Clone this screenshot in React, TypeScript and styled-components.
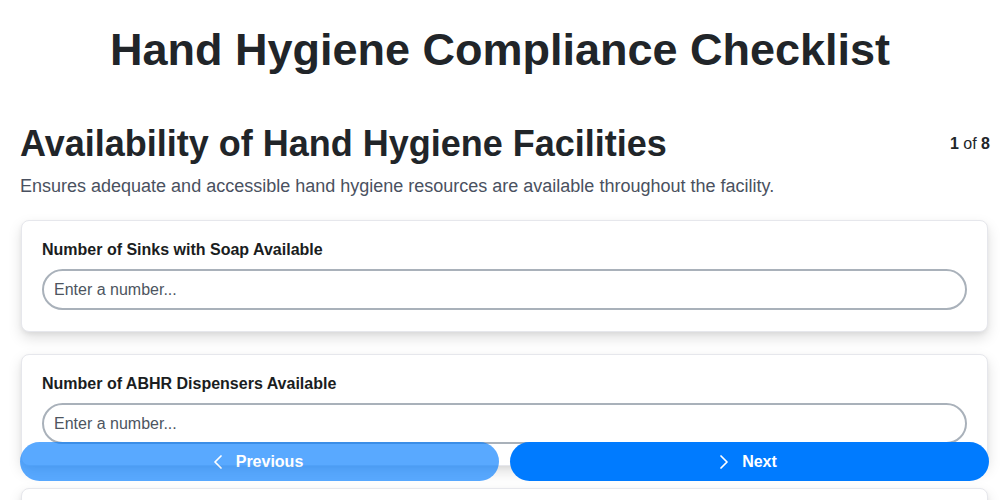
import * as React from 'react';
import styled, { createGlobalStyle } from 'styled-components';
import { ChevronLeft, ChevronRight } from 'lucide-react';

const GlobalStyle = createGlobalStyle`
  * { box-sizing: border-box; }
  body {
    margin: 0;
    background: #ffffff;
    font-family: "Liberation Sans", Arial, sans-serif;
    color: #212529;
  }
`;

const Header = styled.header`
  padding: 22px 20px 0;
`;

const Title = styled.h1`
  margin: 0;
  text-align: center;
  font-size: 45px;
  line-height: 56px;
  font-weight: 700;
`;

const Page = styled.main`
  padding: 0 10px 120px 20px;
`;

const SectionHeader = styled.div`
  display: flex;
  align-items: center;
  justify-content: space-between;
  margin-top: 44px;
`;

const SectionTitle = styled.h2`
  margin: 0;
  font-size: 36px;
  line-height: 44px;
  font-weight: 700;
`;

const Counter = styled.div`
  font-size: 16px;
  color: #212529;
  & b { font-weight: 700; }
`;

const Description = styled.p`
  margin: 9px 0 23px;
  font-size: 18px;
  line-height: 22px;
  color: #4a5160;
`;

const QuestionList = styled.div`
  display: flex;
  flex-direction: column;
  gap: 22px;
`;

const Card = styled.div`
  margin: 0 2px 0 1px;
  padding: 20px 20px 21px;
  background: #fff;
  border: 1px solid #e6e7ec;
  border-radius: 8px;
  box-shadow: 0 6px 14px rgba(0, 0, 0, 0.13), 0 2px 4px rgba(0, 0, 0, 0.05);
`;

const Label = styled.label`
  display: block;
  font-size: 16px;
  line-height: 18px;
  font-weight: 700;
  color: #1a1d21;
  margin-bottom: 10px;
`;

const NumberInput = styled.input`
  display: block;
  width: 100%;
  height: 41px;
  padding: 0 10px;
  border: 2px solid #a9b1ba;
  border-radius: 21px;
  font-family: inherit;
  font-size: 16px;
  color: #212529;
  background: #fff;
  outline: none;
  &::placeholder { color: #4d5560; }
`;

const Footer = styled.div`
  position: fixed;
  left: 20px;
  right: 11px;
  bottom: 19px;
  display: grid;
  grid-template-columns: 1fr 1fr;
  gap: 11px;
`;

const NavButton = styled.button<{ $disabled?: boolean }>`
  display: flex;
  align-items: center;
  justify-content: center;
  gap: 6px;
  height: 39px;
  padding: 0;
  border: none;
  border-radius: 20px;
  background: #007bff;
  color: #fff;
  font-family: inherit;
  font-size: 16px;
  font-weight: 700;
  opacity: ${({ $disabled }) => ($disabled ? 0.65 : 1)};
  cursor: ${({ $disabled }) => ($disabled ? 'default' : 'pointer')};

  & > span { margin-right: 10px; }
`;

const questions = [
  'Number of Sinks with Soap Available',
  'Number of ABHR Dispensers Available',
  'Number of Paper Towel Dispensers Available',
];

export default function App() {
  return (
    <>
      <GlobalStyle />
      <Header>
        <Title>Hand Hygiene Compliance Checklist</Title>
      </Header>
      <Page>
        <SectionHeader>
          <SectionTitle>Availability of Hand Hygiene Facilities</SectionTitle>
          <Counter>
            <b>1</b> of <b>8</b>
          </Counter>
        </SectionHeader>
        <Description>
          Ensures adequate and accessible hand hygiene resources are available throughout the facility.
        </Description>
        <QuestionList>
          {questions.map((q) => (
            <Card key={q}>
              <Label>{q}</Label>
              <NumberInput type="number" placeholder="Enter a number..." />
            </Card>
          ))}
        </QuestionList>
      </Page>
      <Footer>
        <NavButton $disabled>
          <ChevronLeft size={24} strokeWidth={1.75} />
          <span>Previous</span>
        </NavButton>
        <NavButton>
          <ChevronRight size={24} strokeWidth={1.75} />
          <span>Next</span>
        </NavButton>
      </Footer>
    </>
  );
}
